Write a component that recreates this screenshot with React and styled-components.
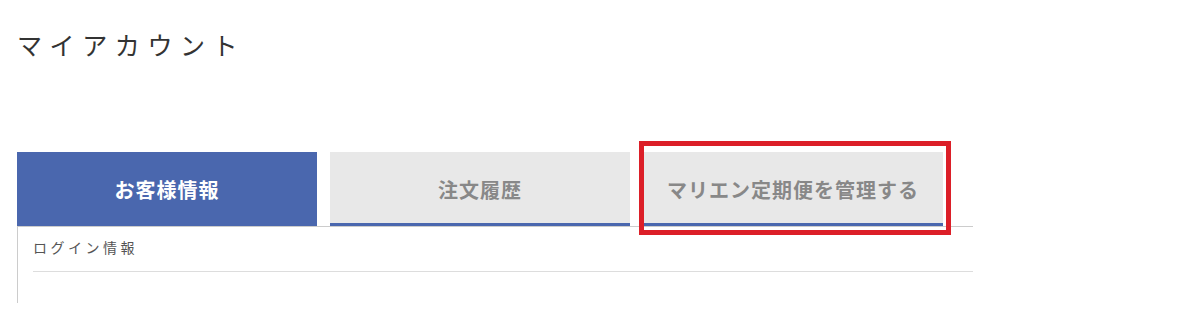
import React from "react";
import styled, { createGlobalStyle } from "styled-components";

const Global = createGlobalStyle`
  html, body { margin: 0; padding: 0; background: #fff; overflow: hidden; }
  body {
    font-family: "Noto Sans CJK JP", "Noto Sans", sans-serif;
    color: #333;
  }
`;

const Page = styled.div`
  padding: 26px 0 0 17px;
  width: 956px;
`;

const Title = styled.h1`
  margin: 0;
  font-size: 25px;
  line-height: 36px;
  font-weight: 400;
  letter-spacing: 7.6px;
  color: #333;
`;

const Tabs = styled.div`
  display: flex;
  gap: 13px;
  margin-top: 90px;
`;

const Tab = styled.div`
  position: relative;
  width: 300px;
  height: 74px;
  box-sizing: border-box;
  display: flex;
  align-items: center;
  justify-content: center;
  font-size: 20px;
  font-weight: 700;
  letter-spacing: 1px;
  background: ${(p) => (p.$active ? "#4a67ae" : "#e8e8e8")};
  color: ${(p) => (p.$active ? "#fff" : "#888")};
  border-bottom: ${(p) => (p.$active ? "none" : "3px solid #4a67ae")};
  padding-top: ${(p) => (p.$active ? "0" : "3px")};
`;

const Highlight = styled.span`
  position: absolute;
  left: -4px;
  top: -11px;
  right: -8px;
  bottom: -12px;
  border: 5px solid #dc1f28;
  pointer-events: none;
`;

const Panel = styled.div`
  box-sizing: border-box;
  border-top: 1px solid #ccc;
  border-left: 1px solid #ccc;
  padding: 10px 0 0 15px;
  height: 77px;
`;

const SectionTitle = styled.div`
  font-size: 14px;
  line-height: 20px;
  letter-spacing: 3.5px;
  color: #555;
  padding-bottom: 14px;
  border-bottom: 1px solid #ddd;
`;

export default function App() {
  return (
    <>
      <Global />
      <Page>
        <Title>マイアカウント</Title>
        <Tabs>
          <Tab $active>お客様情報</Tab>
          <Tab>注文履歴</Tab>
          <Tab>
            マリエン定期便を管理する
            <Highlight />
          </Tab>
        </Tabs>
        <Panel>
          <SectionTitle>ログイン情報</SectionTitle>
        </Panel>
      </Page>
    </>
  );
}
